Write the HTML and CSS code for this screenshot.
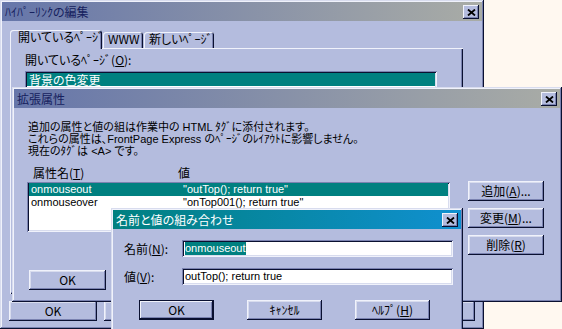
FILE: index.html
```html
<!DOCTYPE html>
<html lang="ja">
<head>
    <meta charset="UTF-8">
    <meta name="viewport" content="width=device-width, initial-scale=1.0">
    <title>ハイパーリンクの編集</title>
    <link rel="stylesheet" href="styles.css">
</head>
<body>
    <div class="desktop">

        <!-- ハイパーリンクの編集 -->
        <div class="window link-dialog">
            <div class="titlebar inactive">
                <span class="caption">ﾊｲﾊﾟｰﾘﾝｸの編集</span>
                <span class="close"><svg width="9" height="7" viewBox="0 0 9 7"><path d="M1 0.5L8 6.5M8 0.5L1 6.5" stroke="#000" stroke-width="1.8"/></svg></span>
            </div>
            <div class="tabs">
                <div class="tab tab-open active">開いているﾍﾟｰｼﾞ</div>
                <div class="tab tab-www">WWW</div>
                <div class="tab tab-new">新しいﾍﾟｰｼﾞ</div>
            </div>
            <div class="tab-panel">
                <div class="field-label">開いているﾍﾟｰｼﾞ(<u>O</u>):</div>
                <div class="page-list">
                    <div class="list-row selected">背景の色変更</div>
                </div>
            </div>
            <!-- only OK is uncovered, the others sit under the other dialogs -->
            <div class="link-buttons">
                <button class="btn link-btn">OK</button>
                <button class="btn link-btn"></button>
                <button class="btn link-btn"></button>
                <button class="btn link-btn"></button>
                <button class="btn link-btn"></button>
            </div>
        </div>

        <!-- 拡張属性 -->
        <div class="window attr-dialog">
            <div class="titlebar inactive">
                <span class="caption">拡張属性</span>
                <span class="close"><svg width="9" height="7" viewBox="0 0 9 7"><path d="M1 0.5L8 6.5M8 0.5L1 6.5" stroke="#000" stroke-width="1.8"/></svg></span>
            </div>
            <div class="note">
                <div>追加の属性と値の組は作業中の HTML ﾀｸﾞに添付されます。</div>
                <div>これらの属性は、FrontPage Express のﾍﾟｰｼﾞのﾚｲｱｳﾄに影響しません。</div>
                <div>現在のﾀｸﾞは &lt;A&gt; です。</div>
            </div>
            <div class="attr-main">
                <div class="attr-left">
                    <div class="attr-head">
                        <span class="head-name">属性名(<u>T</u>)</span>
                        <span>値</span>
                    </div>
                    <div class="attr-list">
                        <div class="list-row attr-row selected">
                            <span class="attr-name">onmouseout</span>
                            <span>"outTop(); return true"</span>
                        </div>
                        <div class="list-row attr-row">
                            <span class="attr-name">onmouseover</span>
                            <span>"onTop001(); return true"</span>
                        </div>
                    </div>
                </div>
                <div class="attr-side">
                    <button class="btn side-btn">追加(<u>A</u>)...</button>
                    <button class="btn side-btn">変更(<u>M</u>)...</button>
                    <button class="btn side-btn">削除(<u>R</u>)</button>
                </div>
            </div>
            <div class="attr-bottom">
                <button class="btn attr-btn">OK</button>
            </div>
        </div>

        <!-- 名前と値の組み合わせ -->
        <div class="window pair-dialog">
            <div class="titlebar active">
                <span class="caption">名前と値の組み合わせ</span>
                <span class="close"><svg width="9" height="7" viewBox="0 0 9 7"><path d="M1 0.5L8 6.5M8 0.5L1 6.5" stroke="#000" stroke-width="1.8"/></svg></span>
            </div>
            <div class="pair-row">
                <span class="pair-label">名前(<u>N</u>):</span>
                <div class="textbox"><span class="text-sel">onmouseout</span></div>
            </div>
            <div class="pair-row">
                <span class="pair-label">値(<u>V</u>):</span>
                <div class="textbox">outTop(); return true</div>
            </div>
            <div class="pair-buttons">
                <button class="btn pair-btn default">OK</button>
                <button class="btn pair-btn">ｷｬﾝｾﾙ</button>
                <button class="btn pair-btn">ﾍﾙﾌﾟ(<u>H</u>)</button>
            </div>
        </div>

    </div>
</body>
</html>
```

FILE: styles.css
```css
body {
    margin: 0;
    font-family: "Noto Sans CJK JP", sans-serif;
    font-size: 12px;
    font-feature-settings: "palt";
    color: #000;
}

.desktop {
    position: relative;
    width: 562px;
    height: 329px;
    overflow: hidden;
    background-color: #fff8f0;
}

/* window frame */
.window {
    position: absolute;
    box-sizing: border-box;
    padding: 2px;
    background-color: #b4bcde;
    box-shadow: inset -1px -1px #0a1030, inset 1px 1px #d8dcee,
                inset -2px -2px #7a82b0, inset 2px 2px #f0f2fb;
}

.titlebar {
    display: flex;
    align-items: flex-start;
    height: 19px;
    padding-left: 3px;
}

.titlebar.inactive {
    background: linear-gradient(to right, #6676aa, #a9aca6);
    color: #16215e;
}

.titlebar.active {
    background: linear-gradient(to right, #008080, #1090d0);
    color: #fff;
}

.caption {
    flex: 1;
    line-height: 19px;
    white-space: nowrap;
}

.close {
    display: flex;
    align-items: center;
    justify-content: center;
    width: 16px;
    height: 14px;
    margin: 3px 3px 0 0;
    background-color: #b4bcde;
    box-shadow: inset -1px -1px #0a1030, inset 1px 1px #f0f2fb,
                inset -2px -2px #7a82b0;
}

/* buttons */
.btn {
    box-sizing: border-box;
    height: 20px;
    padding: 0;
    border: none;
    font: inherit;
    line-height: 20px;
    color: #000;
    background-color: #b4bcde;
    white-space: nowrap;
    box-shadow: inset -1px -1px #0a1030, inset 1px 1px #f0f2fb,
                inset -2px -2px #7a82b0, inset 2px 2px #d8dcee;
}

.btn.default {
    box-shadow: inset 0 0 0 1px #0a1030, inset -2px -2px #0a1030,
                inset 2px 2px #f0f2fb, inset -3px -3px #7a82b0;
}

.list-row {
    height: 13px;
    line-height: 13px;
    white-space: nowrap;
}

.selected {
    background-color: #008080;
    color: #fff;
}

/* ハイパーリンクの編集 */
.link-dialog {
    left: 0;
    top: 0;
    width: 484px;
    height: 329px;
}

.tabs {
    display: flex;
    align-items: flex-end;
    gap: 1px;
    height: 18px;
    margin: 9px 0 0 8px;
}

.tab {
    box-sizing: border-box;
    height: 16px;
    padding-left: 5px;
    line-height: 13px;
    white-space: nowrap;
    border-radius: 3px 3px 0 0;
    background-color: #b4bcde;
    box-shadow: inset 1px 1px #f0f2fb, inset -1px 0 #0a1030, inset -2px 0 #7a82b0;
}

.tab.active {
    position: relative;
    z-index: 1;
    height: 19px;
    margin-bottom: -1px;
    padding-left: 8px;
}

.tab-open { width: 92px; }
.tab-www { width: 40px; }
.tab-new { width: 70px; }

.tab-panel {
    box-sizing: border-box;
    width: 453px;
    height: 246px;
    margin-left: 8px;
    padding: 5px 0 0 15px;
    box-shadow: inset 1px 1px #f0f2fb, inset -1px -1px #0a1030,
                inset -2px -2px #7a82b0;
}

.field-label {
    line-height: 13px;
}

.page-list {
    box-sizing: border-box;
    width: 412px;
    height: 60px;
    margin-top: 5px;
    padding: 2px 2px 0 2px;
    background-color: #fff;
    box-shadow: inset 1px 1px #7a82b0, inset -1px -1px #f0f2fb,
                inset 2px 2px #0a1030, inset -2px -2px #d8dcee;
}

.page-list .list-row {
    padding-left: 2px;
}

.link-buttons {
    display: flex;
    justify-content: space-between;
    width: 466px;
    margin: 7px 0 0 7px;
}

.link-btn {
    width: 88px;
}

/* 拡張属性 */
.attr-dialog {
    left: 12px;
    top: 87px;
    width: 550px;
    height: 215px;
}

.note {
    margin: 13px 0 0 14px;
    font-family: "Liberation Sans", "Noto Sans CJK JP", sans-serif;
    font-size: 11px;
    line-height: 12px;
    white-space: nowrap;
}

.attr-main {
    display: flex;
    margin: 9px 0 0 13px;
}

.attr-left {
    width: 423px;
}

.attr-head {
    display: flex;
    height: 16px;
    line-height: 13px;
}

.head-name {
    box-sizing: border-box;
    width: 151px;
    padding-left: 6px;
}

.attr-list {
    box-sizing: border-box;
    height: 50px;
    padding: 1px 2px 0 2px;
    font-family: "Liberation Sans", sans-serif;
    font-size: 11px;
    background-color: #fff;
    box-shadow: inset 1px 1px #7a82b0, inset -1px -1px #f0f2fb,
                inset 2px 2px #0a1030, inset -2px -2px #d8dcee;
}

.attr-row {
    display: flex;
}

.attr-name {
    box-sizing: border-box;
    width: 154px;
    padding-left: 2px;
}

.attr-side {
    display: flex;
    flex-direction: column;
    gap: 7px;
    margin: 15px 0 0 18px;
}

.side-btn {
    width: 76px;
}

.attr-bottom {
    display: flex;
    gap: 7px;
    margin: 15px 0 0 15px;
}

.attr-btn {
    width: 77px;
}

/* 名前と値の組み合わせ */
.pair-dialog {
    left: 111px;
    top: 208px;
    width: 352px;
    height: 125px;
}

.pair-row {
    display: flex;
    align-items: center;
    margin-top: 11px;
}

.pair-label {
    width: 58px;
    padding-left: 11px;
    line-height: 13px;
    white-space: nowrap;
}

.textbox {
    box-sizing: border-box;
    width: 271px;
    height: 17px;
    padding: 2px 0 0 3px;
    font-family: "Liberation Sans", sans-serif;
    font-size: 11px;
    line-height: 13px;
    white-space: nowrap;
    background-color: #fff;
    box-shadow: inset 1px 1px #7a82b0, inset -1px -1px #f0f2fb,
                inset 2px 2px #0a1030, inset -2px -2px #d8dcee;
}

.text-sel {
    display: inline-block;
    background-color: #008080;
    color: #fff;
}

.pair-buttons {
    display: flex;
    gap: 33px;
    margin: 15px 0 0 26px;
}

.pair-btn {
    width: 75px;
}
```
